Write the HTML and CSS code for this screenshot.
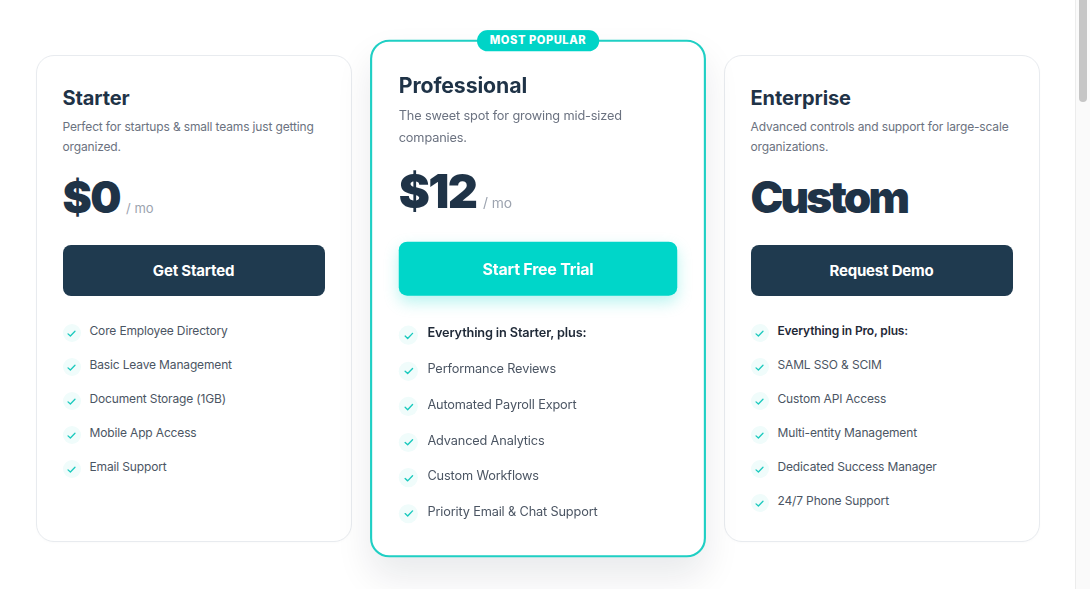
FILE: index.html
```html
<!DOCTYPE html>
<html lang="en">
<head>
<meta charset="utf-8">
<title>Pricing</title>
<link rel="stylesheet" href="styles.css">
</head>
<body>
<main class="page">
  <section class="pricing">
    <article class="card">
      <h2 class="plan">Starter</h2>
      <p class="desc">Perfect for startups &amp; small teams just getting organized.</p>
      <div class="price"><span class="amount">$0</span><span class="per">/ mo</span></div>
      <button class="btn btn-dark">Get Started</button>
      <ul class="features">
        <li><span class="check"><svg viewBox="0 0 12 12"><path d="M2.2 6.4 L4.8 8.8 L9.8 3.6"/></svg></span>Core Employee Directory</li>
        <li><span class="check"><svg viewBox="0 0 12 12"><path d="M2.2 6.4 L4.8 8.8 L9.8 3.6"/></svg></span>Basic Leave Management</li>
        <li><span class="check"><svg viewBox="0 0 12 12"><path d="M2.2 6.4 L4.8 8.8 L9.8 3.6"/></svg></span>Document Storage (1GB)</li>
        <li><span class="check"><svg viewBox="0 0 12 12"><path d="M2.2 6.4 L4.8 8.8 L9.8 3.6"/></svg></span>Mobile App Access</li>
        <li><span class="check"><svg viewBox="0 0 12 12"><path d="M2.2 6.4 L4.8 8.8 L9.8 3.6"/></svg></span>Email Support</li>
      </ul>
    </article>

    <article class="card card-featured">
      <span class="badge">MOST POPULAR</span>
      <h2 class="plan">Professional</h2>
      <p class="desc">The sweet spot for growing mid-sized companies.</p>
      <div class="price"><span class="amount">$12</span><span class="per">/ mo</span></div>
      <button class="btn btn-teal">Start Free Trial</button>
      <ul class="features">
        <li class="strong"><span class="check"><svg viewBox="0 0 12 12"><path d="M2.2 6.4 L4.8 8.8 L9.8 3.6"/></svg></span>Everything in Starter, plus:</li>
        <li><span class="check"><svg viewBox="0 0 12 12"><path d="M2.2 6.4 L4.8 8.8 L9.8 3.6"/></svg></span>Performance Reviews</li>
        <li><span class="check"><svg viewBox="0 0 12 12"><path d="M2.2 6.4 L4.8 8.8 L9.8 3.6"/></svg></span>Automated Payroll Export</li>
        <li><span class="check"><svg viewBox="0 0 12 12"><path d="M2.2 6.4 L4.8 8.8 L9.8 3.6"/></svg></span>Advanced Analytics</li>
        <li><span class="check"><svg viewBox="0 0 12 12"><path d="M2.2 6.4 L4.8 8.8 L9.8 3.6"/></svg></span>Custom Workflows</li>
        <li><span class="check"><svg viewBox="0 0 12 12"><path d="M2.2 6.4 L4.8 8.8 L9.8 3.6"/></svg></span>Priority Email &amp; Chat Support</li>
      </ul>
    </article>

    <article class="card">
      <h2 class="plan">Enterprise</h2>
      <p class="desc">Advanced controls and support for large-scale organizations.</p>
      <div class="price"><span class="amount amount-word">Custom</span></div>
      <button class="btn btn-dark">Request Demo</button>
      <ul class="features">
        <li class="strong"><span class="check"><svg viewBox="0 0 12 12"><path d="M2.2 6.4 L4.8 8.8 L9.8 3.6"/></svg></span>Everything in Pro, plus:</li>
        <li><span class="check"><svg viewBox="0 0 12 12"><path d="M2.2 6.4 L4.8 8.8 L9.8 3.6"/></svg></span>SAML SSO &amp; SCIM</li>
        <li><span class="check"><svg viewBox="0 0 12 12"><path d="M2.2 6.4 L4.8 8.8 L9.8 3.6"/></svg></span>Custom API Access</li>
        <li><span class="check"><svg viewBox="0 0 12 12"><path d="M2.2 6.4 L4.8 8.8 L9.8 3.6"/></svg></span>Multi-entity Management</li>
        <li><span class="check"><svg viewBox="0 0 12 12"><path d="M2.2 6.4 L4.8 8.8 L9.8 3.6"/></svg></span>Dedicated Success Manager</li>
        <li><span class="check"><svg viewBox="0 0 12 12"><path d="M2.2 6.4 L4.8 8.8 L9.8 3.6"/></svg></span>24/7 Phone Support</li>
      </ul>
    </article>
  </section>
  <section class="below"></section>
</main>
<div class="scrollbar" aria-hidden="true"><div class="thumb"></div></div>
</body>
</html>
```

FILE: styles.css
```css
html, body {
  margin: 0;
  padding: 0;
  background: #ffffff;
}

html {
  scrollbar-width: none;
}
::-webkit-scrollbar {
  width: 0;
  height: 0;
}

body {
  font-family: "Inter", "Noto Sans", "Liberation Sans", sans-serif;
  color: #1f3347;
  -webkit-font-smoothing: antialiased;
  padding-right: 15px;
}

/* classic browser scrollbar, drawn over the right edge */
.scrollbar {
  position: fixed;
  top: 0;
  right: 0;
  bottom: 0;
  width: 14px;
  background: #fafafa;
  border-left: 1px solid #ececec;
  z-index: 10;
}
.scrollbar .thumb {
  margin: 0 3px 0 3px;
  height: 102px;
  background: #c6c6c6;
  border-radius: 0 0 5px 5px;
}

.page {
  display: flex;
  flex-direction: column;
}

.pricing {
  display: grid;
  grid-template-columns: repeat(3, 316px);
  column-gap: 28px;
  justify-content: center;
  padding-top: 55px;
}

.below {
  height: 2810px;
}

.card {
  position: relative;
  background: #fff;
  border: 1px solid #e8ebef;
  border-radius: 18px;
  padding: 28px 26px 30px 26px;
  display: flex;
  flex-direction: column;
  box-shadow: 0 1px 3px rgba(15, 23, 42, 0.02);
}

.card-featured {
  border: 2px solid #1fcfc4;
  padding: 27px 25px 29px 25px;
  transform: scale(1.063);
  box-shadow: 0 18px 34px rgba(15, 23, 42, 0.09);
  z-index: 1;
}

.badge {
  position: absolute;
  top: -11px;
  left: 50%;
  transform: translateX(-50%);
  height: 20px;
  padding: 0 12px;
  border-radius: 10px;
  background: #00d4c7;
  color: #fff;
  font-size: 10.5px;
  font-weight: 800;
  letter-spacing: 0.5px;
  line-height: 20px;
  white-space: nowrap;
}

.plan {
  margin: 0;
  font-size: 20px;
  line-height: 28px;
  font-weight: 700;
  color: #1f3347;
  letter-spacing: -0.1px;
}

.desc {
  margin: 5px 0 0;
  font-size: 12px;
  line-height: 20px;
  letter-spacing: -0.15px;
  color: #6b7280;
}

.price {
  margin-top: 18px;
  display: flex;
  align-items: baseline;
}

.amount {
  font-size: 44px;
  line-height: 44px;
  font-weight: 900;
  letter-spacing: -1.5px;
  color: #1f3347;
}

.amount-word {
  letter-spacing: -2.8px;
}

.per {
  margin-left: 6px;
  font-size: 13px;
  color: #9ca3af;
}

.btn {
  margin-top: 26px;
  height: 51px;
  border: none;
  border-radius: 8px;
  font-family: inherit;
  font-size: 15px;
  font-weight: 700;
  color: #fff;
  letter-spacing: -0.2px;
  cursor: pointer;
}

.btn-dark {
  background: #1f3a4f;
}

.btn-teal {
  background: #00d6c9;
  box-shadow: 0 6px 14px rgba(0, 214, 201, 0.28);
}

.features {
  list-style: none;
  margin: 25px 0 0;
  padding: 0;
  display: flex;
  flex-direction: column;
  gap: 14px;
}

.card-featured .features {
  gap: 13.5px;
}

.features li {
  display: flex;
  align-items: flex-start;
  gap: 9px;
  font-size: 12px;
  line-height: 20px;
  letter-spacing: -0.15px;
  color: #4b5563;
}

.features li.strong {
  font-weight: 600;
  color: #1f2937;
}

.check {
  flex: none;
  width: 18px;
  height: 18px;
  margin-top: 3px;
  margin-bottom: -1px;
  border-radius: 50%;
  background: #f0fcfb;
  display: flex;
  align-items: center;
  justify-content: center;
}

.check svg {
  width: 11px;
  height: 11px;
  fill: none;
  stroke: #19c9bd;
  stroke-width: 1.4;
  stroke-linecap: round;
  stroke-linejoin: round;
}
```
